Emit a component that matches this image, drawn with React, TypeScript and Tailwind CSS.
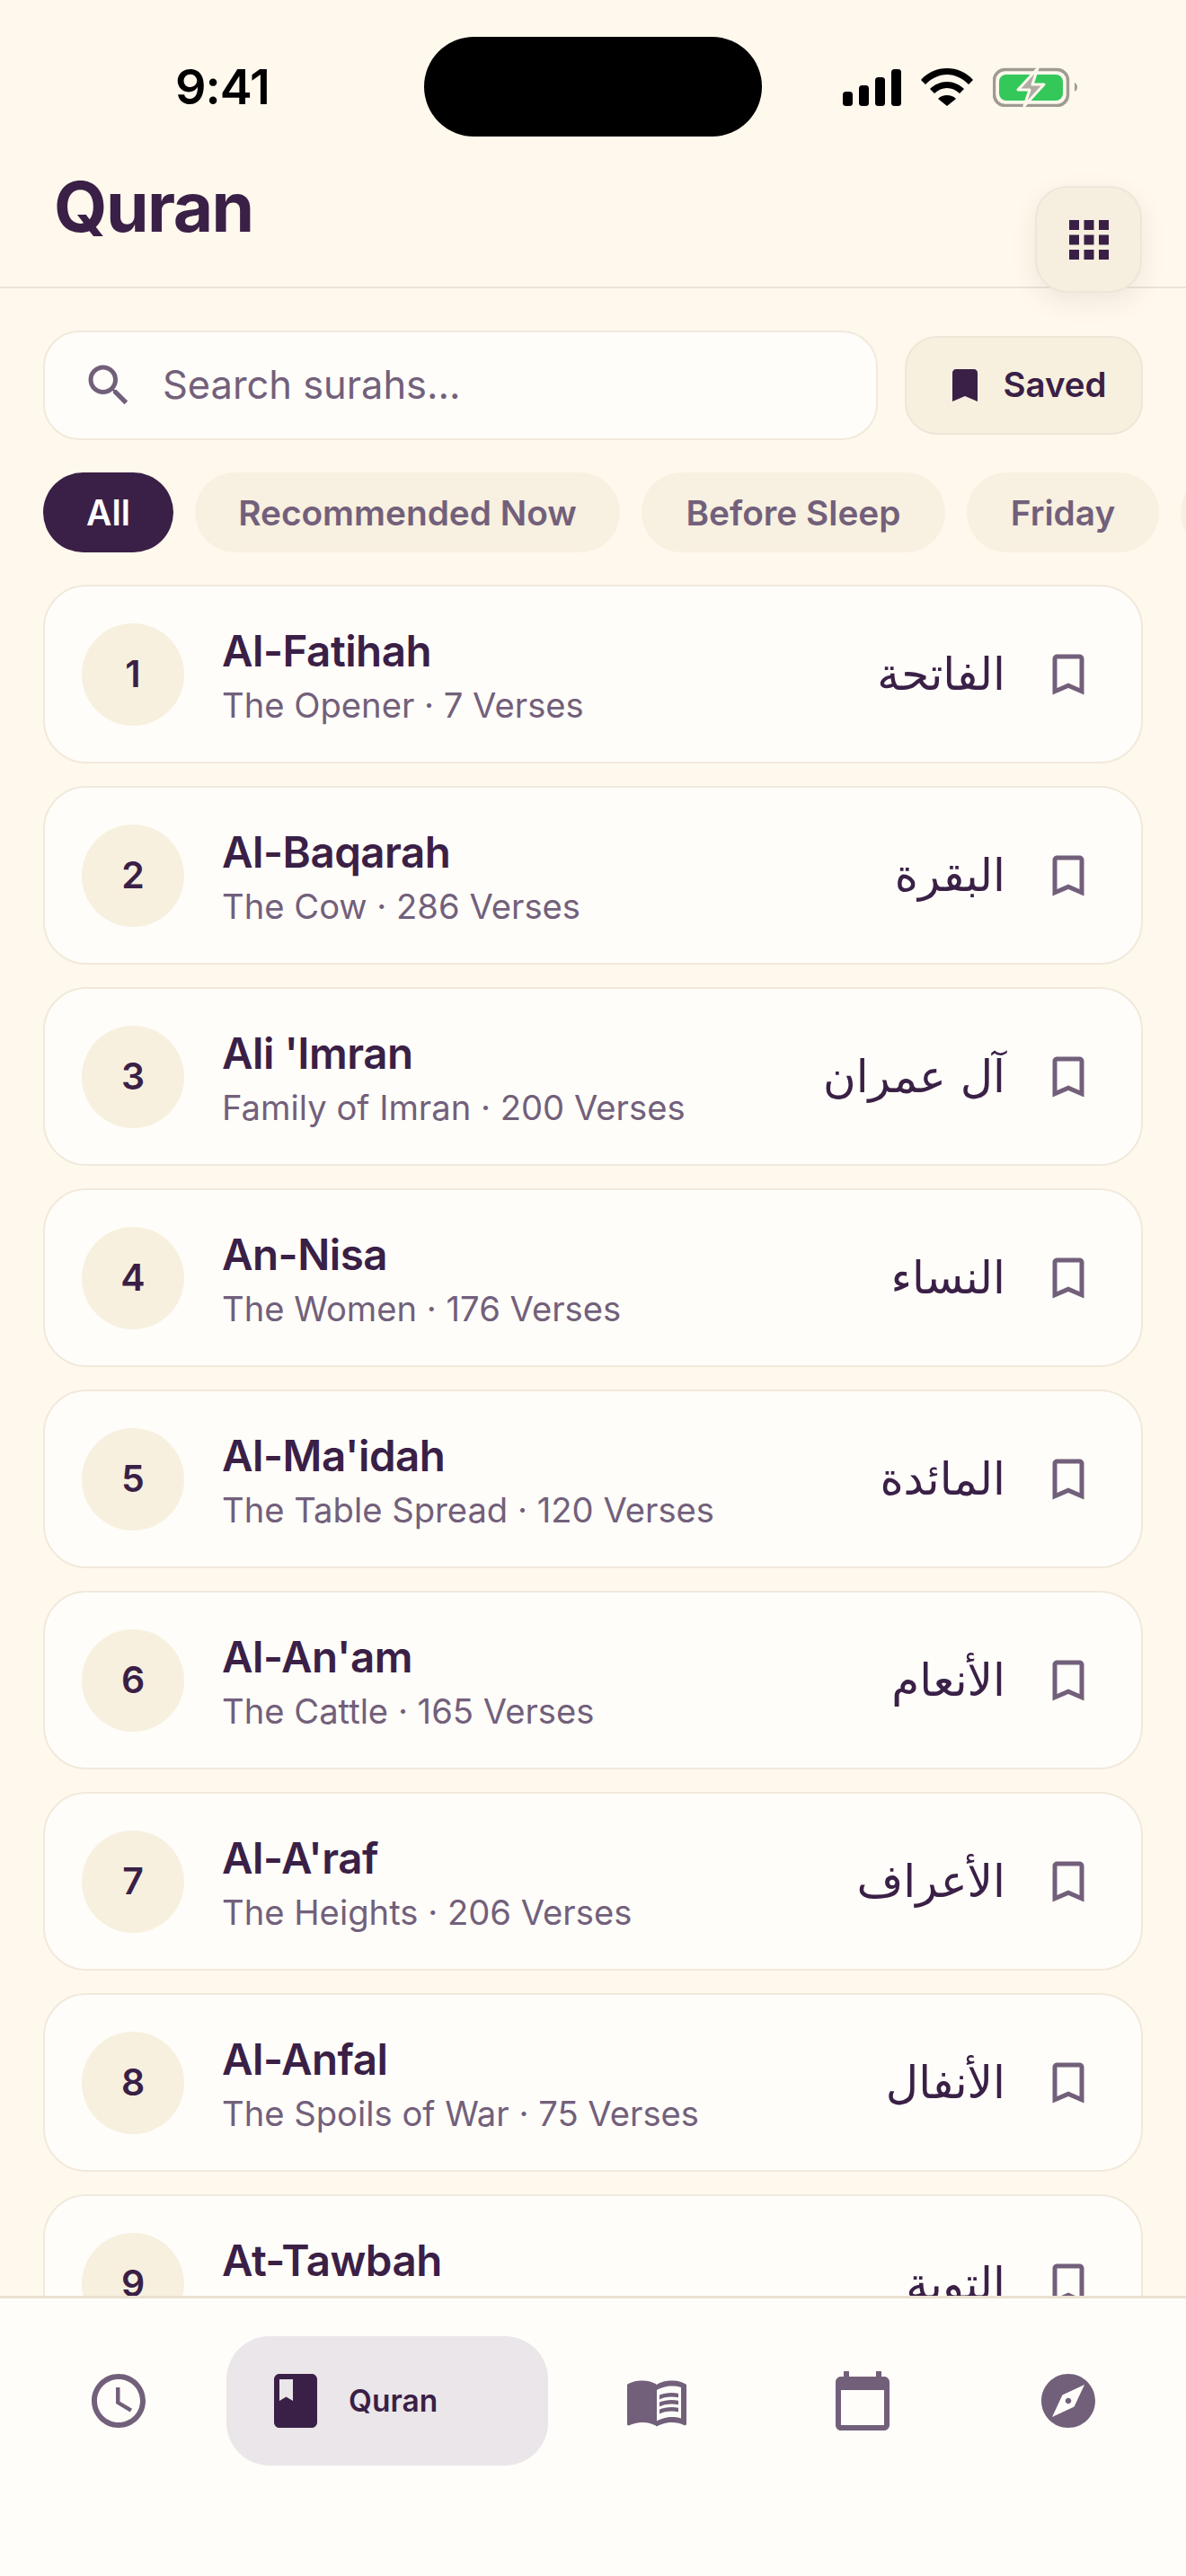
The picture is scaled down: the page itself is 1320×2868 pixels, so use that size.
import React from "react";
import { MdAccessTime, MdApps, MdBook, MdBookmark, MdBookmarkBorder, MdCalendarToday, MdExplore, MdMenuBook, MdSearch } from "react-icons/md";

const surahs = [
  ["1", "Al-Fatihah", "The Opener · 7 Verses", "الفاتحة"],
  ["2", "Al-Baqarah", "The Cow · 286 Verses", "البقرة"],
  ["3", "Ali 'Imran", "Family of Imran · 200 Verses", "آل عمران"],
  ["4", "An-Nisa", "The Women · 176 Verses", "النساء"],
  ["5", "Al-Ma'idah", "The Table Spread · 120 Verses", "المائدة"],
  ["6", "Al-An'am", "The Cattle · 165 Verses", "الأنعام"],
  ["7", "Al-A'raf", "The Heights · 206 Verses", "الأعراف"],
  ["8", "Al-Anfal", "The Spoils of War · 75 Verses", "الأنفال"],
  ["9", "At-Tawbah", "Repentance · 129 Verses", "التوبة"],
];

function StatusIcons() {
  return (
    <div className="flex items-center gap-[22px]">
      <svg width="66" height="42" viewBox="0 0 66 42" fill="#000">
        <rect x="1" y="26" width="11" height="16" rx="3.5" />
        <rect x="19" y="19" width="11" height="23" rx="3.5" />
        <rect x="37" y="10" width="11" height="32" rx="3.5" />
        <rect x="55" y="1" width="11" height="41" rx="3.5" />
      </svg>
      <svg width="58" height="42" viewBox="0 0 58 42" fill="#000">
        <path d="M29 0C18 0 8 4 0 13l5 5C12 11 20 7 29 7s17 4 24 11l5-5C50 4 40 0 29 0z" />
        <path d="M29 15c-7 0-14 3-19 8l5 5c4-4 9-6 14-6s10 2 14 6l5-5c-5-5-12-8-19-8z" />
        <path d="M29 30c-4 0-7 1-10 4l10 8 10-8c-3-3-6-4-10-4z" />
      </svg>
      <svg width="94" height="44" viewBox="0 0 94 44">
        <rect x="1.5" y="2.5" width="82" height="40" rx="12" fill="none" stroke="#9f9a92" strokeWidth="3.5" />
        <rect x="7" y="8" width="71" height="29" rx="8" fill="#34c85a" />
        <path d="M91 17c2 1 3 3 3 5s-1 4-3 5z" fill="#9f9a92" />
        <path d="M50 1 28 25h13l-6 18 22-24H44z" fill="#b1ada5" stroke="#fff8ed" strokeWidth="3" strokeLinejoin="round" />
      </svg>
    </div>
  );
}

function Row({ n, name, sub, ar }: { n: string; name: string; sub: string; ar: string }) {
  return (
    <div className="flex h-[199px] shrink-0 items-center rounded-[48px] border-2 border-[#f1e9dc] bg-[#fffdf9] pl-[41px] pr-[51px]">
      <div className="flex h-[114px] w-[114px] shrink-0 items-center justify-center rounded-full bg-[#f7f0df] text-[41px] font-semibold text-[#3a2046]">
        {n}
      </div>
      <div className="ml-[42px] flex min-w-0 flex-1 flex-col pt-[3px]">
        <div className="text-[47.5px] leading-[60px] font-semibold tracking-[-0.5px] text-[#3a2046]">{name}</div>
        <div className="mt-[5px] text-[38.2px] leading-[50px] text-[#72607b]">{sub}</div>
      </div>
      <div dir="rtl" className="text-[50px] leading-[70px] text-[#3a2046] [font-family:'DejaVu_Sans',sans-serif]">
        {ar}
      </div>
      <MdBookmarkBorder className="ml-[40px] shrink-0 text-[#72607b]" size={60} />
    </div>
  );
}

export default function App() {
  return (
    <div className="relative flex h-[2868px] w-[1320px] flex-col overflow-hidden bg-[#fff8ed] [font-family:Inter,sans-serif]">
      <div className="flex h-[193px] shrink-0 items-start pl-[195px] pr-[120px] pt-[41px]">
        <div className="flex h-[111px] w-[106px] items-center text-[54px] font-semibold tracking-[-1px] whitespace-nowrap text-black">9:41</div>
        <div className="ml-[171px] h-[111px] w-[376px] rounded-[56px] bg-black" />
        <div className="ml-[89px] flex h-[111px] items-center"><StatusIcons /></div>
      </div>

      <div className="relative h-[128px] shrink-0 border-b-2 border-[#ebe3d6] pl-[60px]">
        <div className="-mt-[1px] text-[76.5px] leading-[76px] font-bold tracking-[-1.5px] text-[#3a2046]">Quran</div>
        <div className="absolute left-[1152px] top-[14px] flex h-[119px] w-[119px] items-center justify-center rounded-[36px] border-2 border-[#eee6d8] bg-[#f6efdf] shadow-[0_10px_30px_rgba(60,40,30,0.08)]">
          <MdApps className="text-[#3a2046]" size={66} />
        </div>
      </div>

      <div className="flex min-h-0 flex-1 flex-col px-[48px] pt-[47px]">
        <div className="flex shrink-0 items-center gap-[30px]">
          <div className="flex h-[122px] w-[929px] items-center rounded-[40px] border-2 border-[#f1e9dc] bg-[#fffdf9] pl-[41px]">
            <MdSearch className="text-[#72607b]" size={60} />
            <span className="ml-[30px] text-[43.4px] text-[#72607b]">Search surahs...</span>
          </div>
          <div className="flex h-[110px] flex-1 items-center justify-center gap-[18px] rounded-[36px] border-2 border-[#eee6d8] bg-[#f7f0df] pl-[3px]">
            <MdBookmark className="text-[#3a2046]" size={48} />
            <span className="text-[38.5px] font-semibold text-[#3a2046]">Saved</span>
          </div>
        </div>

        <div className="mt-[36px] flex shrink-0 gap-[24px]">
          <div className="flex h-[89px] w-[145px] shrink-0 items-center justify-center rounded-full bg-[#3a2046] pt-[2px] text-[39px] font-semibold text-white">All</div>
          <div className="flex h-[89px] w-[473px] shrink-0 items-center justify-center rounded-full bg-[#f8f0e0] pt-[2px] text-[38.8px] font-semibold text-[#72607b]">Recommended Now</div>
          <div className="flex h-[89px] w-[338px] shrink-0 items-center justify-center rounded-full bg-[#f8f0e0] pt-[2px] text-[38.8px] font-semibold text-[#72607b]">Before Sleep</div>
          <div className="flex h-[89px] w-[214px] shrink-0 items-center justify-center rounded-full bg-[#f8f0e0] pt-[2px] text-[38.8px] font-semibold text-[#72607b]">Friday</div>
          <div className="flex h-[89px] w-[200px] shrink-0 items-center justify-center rounded-full bg-[#f8f0e0]" />
        </div>

        <div className="mt-[36px] flex min-h-0 flex-1 flex-col gap-[25px] overflow-hidden">
          {surahs.map((s) => (
            <Row key={s[0]} n={s[0]} name={s[1]} sub={s[2]} ar={s[3]} />
          ))}
        </div>
      </div>

      <div className="flex h-[312px] shrink-0 items-start border-t-[3px] border-[#ebe0d0] bg-[#fffdf9] px-[17px] pt-[42px]">
        <div className="flex h-[144px] w-[229px] items-center justify-center"><MdAccessTime className="text-[#72607b]" size={72} /></div>
        <div className="w-[370px] px-[6px]">
          <div className="flex h-[144px] items-center rounded-[48px] bg-[#eae6e9] pl-[41px]">
            <MdBook className="text-[#3a2046]" size={72} />
            <span className="ml-[23px] text-[33.5px] font-semibold text-[#3a2046]">Quran</span>
          </div>
        </div>
        <div className="flex h-[144px] w-[229px] items-center justify-center"><MdMenuBook className="text-[#72607b]" size={72} /></div>
        <div className="flex h-[144px] w-[229px] items-center justify-center"><MdCalendarToday className="text-[#72607b]" size={72} /></div>
        <div className="flex h-[144px] w-[229px] items-center justify-center"><MdExplore className="text-[#72607b]" size={72} /></div>
      </div>
    </div>
  );
}
